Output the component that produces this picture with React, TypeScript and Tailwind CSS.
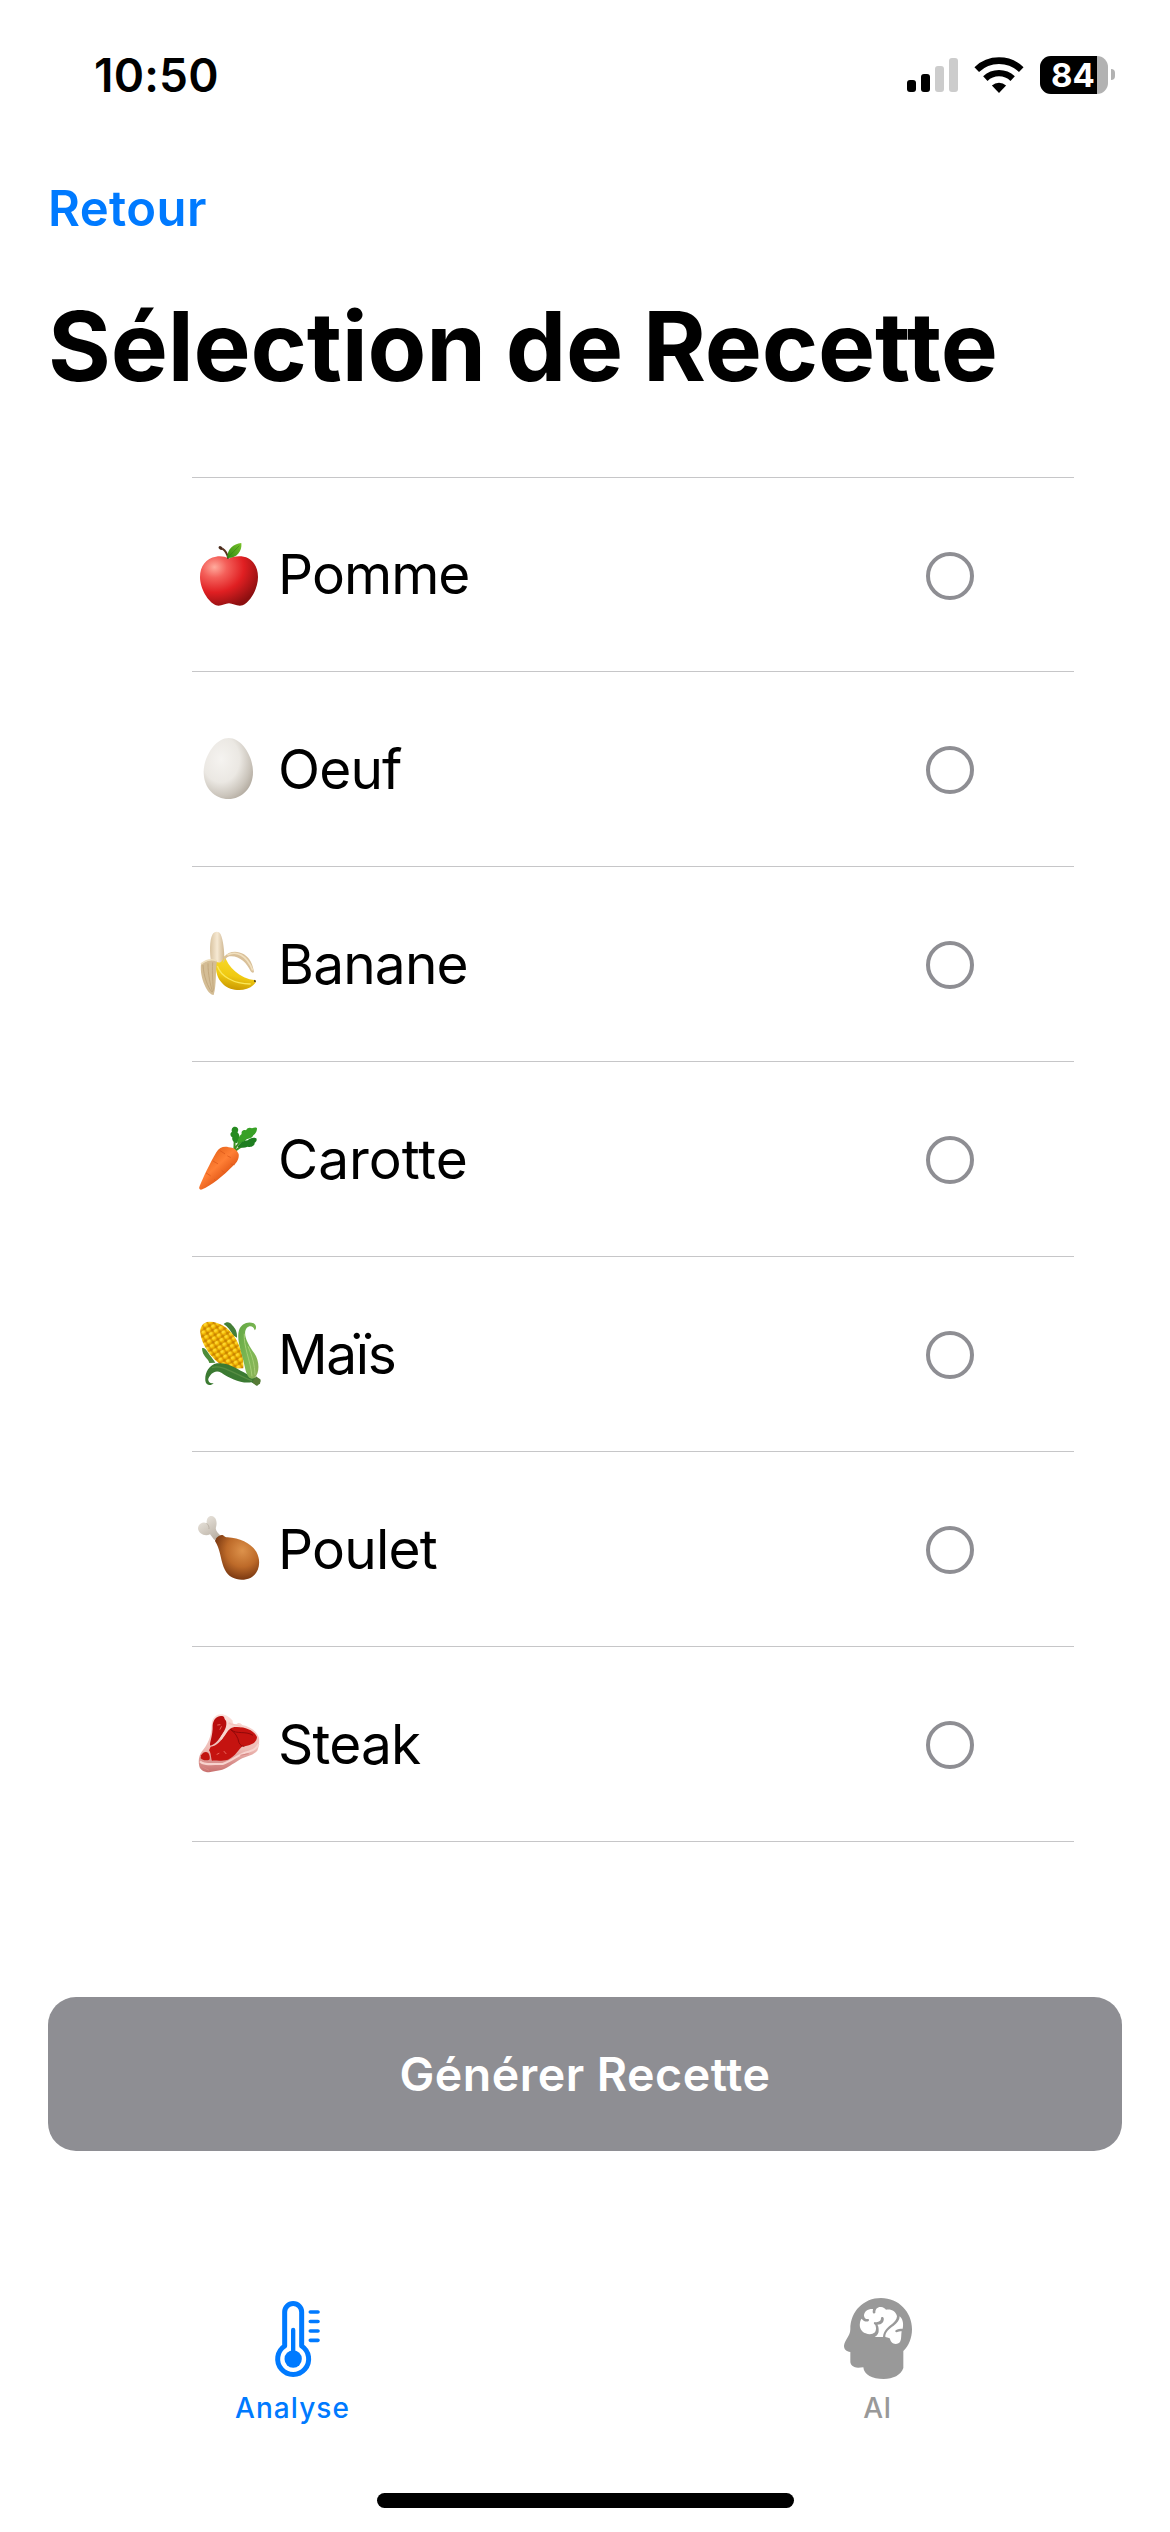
import { useState, type ReactNode } from "react";

function Emoji({ top, children }: { top: number; children: ReactNode }) {
  return (
    <svg viewBox={`54 ${top} 192 192`} className="h-16 w-16 shrink-0 overflow-visible" aria-hidden="true">
      {children}
    </svg>
  );
}

function Apple() {
  return (
    <Emoji top={66}>
      <defs>
        <radialGradient id="apple" cx="0.25" cy="0.22" r="0.85">
          <stop offset="0" stopColor="#ffab9d" />
          <stop offset="0.25" stopColor="#f4605a" />
          <stop offset="0.6" stopColor="#e01f22" />
          <stop offset="1" stopColor="#8c0f10" />
        </radialGradient>
        <linearGradient id="leaf" x1="0" y1="1" x2="1" y2="0">
          <stop offset="0" stopColor="#2f8a12" />
          <stop offset="1" stopColor="#7ac32a" />
        </linearGradient>
      </defs>
      <path d="M146 113C135 106 121 105 108 107C78 111 60 136 60 168C60 202 84 243 108 253C122 258 134 247 147 247C160 247 172 258 188 253C212 243 234 202 234 168C234 134 214 109 184 106C170 105 158 107 146 113Z" fill="url(#apple)" />
      <path d="M145 113C142 99 135 88 127 83" stroke="#5b3420" strokeWidth="6" fill="none" />
      <ellipse cx="122" cy="81" rx="7" ry="5" fill="#4b2b1c" transform="rotate(35 122 81)" />
      <path d="M142 111C141 85 160 68 184 66C187 91 170 112 142 111Z" fill="url(#leaf)" />
      <path d="M144 109C155 98 166 86 178 74" stroke="#2c7a10" strokeWidth="1.5" fill="none" />
    </Emoji>
  );
}

function Egg() {
  return (
    <Emoji top={81}>
      <defs>
        <radialGradient id="egg" cx="0.35" cy="0.35" r="0.75">
          <stop offset="0" stopColor="#f5f3f0" />
          <stop offset="0.5" stopColor="#ebe8e3" />
          <stop offset="0.8" stopColor="#cbc5bc" />
          <stop offset="1" stopColor="#b0a89d" />
        </radialGradient>
      </defs>
      <path d="M146 84C186 84 219 140 219 186C219 235 185 267 145 267C104 267 71 235 71 186C71 140 106 84 146 84Z" fill="url(#egg)" />
    </Emoji>
  );
}

function Banana() {
  return (
    <Emoji top={66}>
      <defs>
        <linearGradient id="bananaFlesh" x1="0" y1="0" x2="1" y2="0">
          <stop offset="0" stopColor="#d9c3a0" />
          <stop offset="0.5" stopColor="#f6e9d3" />
          <stop offset="1" stopColor="#cfb792" />
        </linearGradient>
        <linearGradient id="bananaSkin" x1="0.6" y1="0" x2="0.4" y2="1">
          <stop offset="0" stopColor="#f9dc2e" />
          <stop offset="0.6" stopColor="#f0ca12" />
          <stop offset="1" stopColor="#c99700" />
        </linearGradient>
      </defs>
      <path d="M94 158C88 130 89 88 97 74C103 63 117 63 122 73C130 90 133 125 133 145L122 162Z" fill="url(#bananaFlesh)" />
      <path d="M108 155C120 160 126 158 134 137C144 170 176 204 227 211C229 216 226 220 221 224C196 248 152 243 131 224C116 211 105 192 108 155Z" fill="url(#bananaSkin)" />
      <path d="M112 168C122 198 160 222 212 222" stroke="#fbe758" strokeWidth="4" fill="none" />
      <path d="M222 209L228 212L227 217L222 215Z" fill="#54451b" />
      <path d="M132 141C145 124 170 120 192 133C211 145 219 166 222 186C219 190 215 188 212 184C201 158 176 135 148 139C138 142 134 151 128 160Z" fill="#d9c099" />
      <path d="M142 135C168 122 199 133 218 181" stroke="#f1e0bf" strokeWidth="5" fill="none" />
      <path d="M63 162C78 152 96 146 111 153C106 180 110 225 101 255C84 256 58 205 63 162Z" fill="#d4bd95" />
      <path d="M69 165C71 200 84 232 96 247M84 160C84 195 91 225 98 246M98 157C96 190 99 220 100 242" stroke="#bfa478" strokeWidth="2.5" fill="none" />
      <path d="M63 162C78 150 96 146 111 153" stroke="#eedfbf" strokeWidth="5" fill="none" />
    </Emoji>
  );
}

function Carrot() {
  return (
    <Emoji top={651}>
      <defs>
        <linearGradient id="carrot" x1="0.2" y1="0.2" x2="0.7" y2="0.8">
          <stop offset="0" stopColor="#e8651b" />
          <stop offset="0.45" stopColor="#ff7f35" />
          <stop offset="1" stopColor="#d84a0c" />
        </linearGradient>
      </defs>
      <path d="M162 722C168 705 186 690 206 678M163 720C165 700 164 685 162 668M166 722C180 710 198 702 214 698" stroke="#3c8f1e" strokeWidth="6" fill="none" />
      <path d="M170 700C160 697 155 690 157 682C149 677 150 668 156 666C152 656 160 647 168 651C176 653 176 662 172 667C181 674 180 688 170 700Z" fill="#268a20" />
      <path d="M172 700C174 685 178 678 185 672C183 664 189 657 198 661C202 651 212 652 216 655C223 651 231 652 231 655C231 663 228 670 220 676C217 685 205 686 200 688C192 697 182 700 172 700Z" fill="#38a126" />
      <path d="M172 712C180 698 190 692 203 691C210 683 222 681 229 685C232 691 228 695 224 698C225 708 213 713 203 710C192 715 182 712 172 712Z" fill="#1d7d20" />
      <path d="M109 727C118 712 132 708 146 712C161 713 170 719 176 732C178 746 171 757 161 766C131 797 92 828 67 838C59 841 55 836 59 828C70 802 88 763 109 727Z" fill="url(#carrot)" />
      <path d="M120 722L134 731M153 762L163 764M99 753L113 761M126 782L133 787M79 789L91 797M103 808L107 812M143 738L151 742" stroke="#dd5a1c" strokeWidth="2.5" strokeLinecap="round" />
    </Emoji>
  );
}

function Corn() {
  return (
    <Emoji top={66}>
      <defs>
        <pattern id="kernels" width="17" height="16" patternUnits="userSpaceOnUse" patternTransform="rotate(-32)">
          <rect width="17" height="16" fill="#c98200" />
          <rect x="1" y="1" width="15" height="14" rx="5.5" fill="#f2b705" />
          <rect x="3" y="2" width="10" height="8" rx="4" fill="#ffd92b" />
        </pattern>
        <linearGradient id="husk" x1="0" y1="0" x2="1" y2="1">
          <stop offset="0" stopColor="#63a744" />
          <stop offset="0.6" stopColor="#7fb955" />
          <stop offset="1" stopColor="#8fae58" />
        </linearGradient>
      </defs>
      <path d="M131 72C139 64 150 65 156 75C167 86 172 96 171 113L159 106C151 90 144 80 131 72Z" fill="#447f36" />
      <path d="M66 145C75 140 82 155 89 165C96 173 101 181 106 188L88 189C85 175 67 170 66 145Z" fill="#4c8b39" />
      <path d="M62 105C57 82 68 66 88 65C117 64 147 85 161 106C181 137 193 174 190 205L148 206C119 199 72 156 62 105Z" fill="url(#kernels)" />
      <path d="M101 249C93 259 78 257 76 242C74 221 85 195 111 190C145 186 167 205 190 216C205 225 220 232 240 237L241 245L232 257L214 247C180 251 150 235 124 218C104 207 91 223 85 236C83 246 92 252 101 249Z" fill="#3b7a32" />
      <path d="M96 203C127 193 155 218 216 242" stroke="#578d43" strokeWidth="4" fill="none" />
      <path d="M228 229L242 239L240 251L229 257L217 247Z" fill="#567a36" />
      <path d="M224 91C221 77 208 75 200 84C186 103 206 136 223 160C239 183 240 220 223 234C207 242 199 225 194 199C187 162 168 119 177 91C183 72 203 63 221 70C230 75 230 86 224 91Z" fill="url(#husk)" />
      <path d="M193 101C190 139 211 179 216 229M204 139C217 169 224 195 225 224" stroke="#a7ce76" strokeWidth="3" fill="none" />
    </Emoji>
  );
}

function Drumstick() {
  return (
    <Emoji top={651}>
      <defs>
        <radialGradient id="meat" cx="0.62" cy="0.35" r="0.72">
          <stop offset="0" stopColor="#dd924b" />
          <stop offset="0.5" stopColor="#bd6a29" />
          <stop offset="1" stopColor="#6b2d0c" />
        </radialGradient>
        <linearGradient id="bone" x1="0" y1="0" x2="0.6" y2="1">
          <stop offset="0" stopColor="#f0ece5" />
          <stop offset="1" stopColor="#bcb3a7" />
        </linearGradient>
      </defs>
      <path d="M103 720L90 703C75 711 55 701 54 685C55 671 69 664 80 670C79 655 86 647 95 648C107 650 113 664 108 682C105 690 114 700 122 707Z" fill="url(#bone)" />
      <path d="M80 670C85 675 88 680 87 687" stroke="#b6aca0" strokeWidth="2.5" fill="none" />
      <path d="M105 723C107 714 116 706 125 705C132 705 133 712 142 712C180 715 211 728 229 755C246 786 236 822 211 834C183 846 148 837 135 810C123 787 122 755 110 732Z" fill="url(#meat)" />
    </Emoji>
  );
}

function Steak() {
  return (
    <Emoji top={636}>
      <defs>
        <linearGradient id="fat" x1="0" y1="0" x2="0" y2="1">
          <stop offset="0" stopColor="#fbe1dc" />
          <stop offset="0.6" stopColor="#eebbb5" />
          <stop offset="1" stopColor="#c9706e" />
        </linearGradient>
      </defs>
      <path d="M95 674C96 655 107 644 122 643C137 643 148 651 158 662C157 671 161 674 170 673C174 666 182 668 187 675C209 679 230 693 237 713C239 726 236 742 232 752C218 768 198 768 181 778C159 791 138 808 120 811L87 817C71 817 60 809 58 799C54 783 57 766 65 755C83 732 94 713 95 674Z" fill="url(#fat)" />
      <path d="M60 784C70 797 102 791 128 792C157 783 180 759 205 755C220 752 231 743 236 732" stroke="#f8d3ce" strokeWidth="6" fill="none" />
      <path d="M98 676C100 657 112 646 126 648C136 650 131 657 138 662C142 676 135 690 127 702C118 716 107 734 91 737C87 731 99 709 98 676Z" fill="#b90d0d" />
      <path d="M92 740C110 739 123 723 137 703C145 688 155 680 171 681C199 681 222 692 231 711C230 729 211 737 188 739C175 747 169 768 144 779C125 784 109 781 96 782C92 773 94 760 87 751Z" fill="#c51310" />
      <path d="M151 688C165 697 174 711 177 728C181 736 187 739 193 739M151 688C171 705 195 691 219 706" stroke="#8f0808" strokeWidth="3" fill="none" />
      <path d="M63 766C69 756 78 753 85 759C89 766 91 774 88 779C80 783 67 781 62 775Z" fill="#c11410" />
      <path d="M150 665C150 684 132 698 122 718" stroke="#f8d5ce" strokeWidth="7" fill="none" />
      <path d="M146 669C159 678 171 672 183 680" stroke="#f4c4bd" strokeWidth="5" fill="none" />
      <path d="M113 675L120 674M111 763L117 760M132 754L138 761M120 688L124 680" stroke="#e8665c" strokeWidth="3" strokeLinecap="round" />
      <path d="M67 801L87 811M121 803L146 791M181 766L206 761" stroke="#d88784" strokeWidth="3" fill="none" />
    </Emoji>
  );
}

function Signal() {
  return (
    <div className="flex h-[34px] items-end gap-[5px]">
      <div className="h-3 w-[9px] rounded-[3px] bg-black" />
      <div className="h-[18px] w-[9px] rounded-[3px] bg-black" />
      <div className="h-[26px] w-[9px] rounded-[3px] bg-[#cccccc]" />
      <div className="h-[34px] w-[9px] rounded-[3px] bg-[#cccccc]" />
    </div>
  );
}

function Wifi() {
  return (
    <svg viewBox="282 72 150 114" className="h-[38px] w-[50px]" aria-hidden="true">
      <path d="M290.2 112.7A97 97 0 0 1 423.8 112.7" stroke="#000" strokeWidth="20" fill="none" />
      <path d="M316 139.9A59.5 59.5 0 0 1 398 139.9" stroke="#000" strokeWidth="19" fill="none" />
      <path d="M357 183L335.7 160.5A31 31 0 0 1 378.3 160.5Z" />
    </svg>
  );
}

function Battery() {
  return (
    <div className="flex items-center gap-[3px]">
      <div className="flex h-[38px] w-[68px] overflow-hidden rounded-[11px] bg-[#b2b2b2]">
        <div className="flex w-[57px] items-center bg-black pl-[11px] text-[33px] leading-[38px] font-bold text-white">84</div>
      </div>
      <div className="h-[11px] w-1 rounded-r-full bg-[#b2b2b2]" />
    </div>
  );
}

function Thermometer() {
  return (
    <svg viewBox="192 60 168 234" className="h-[78px] w-14" fill="none" stroke="#007aff" aria-hidden="true">
      <path d="M251 96A25.5 25.5 0 0 1 302 96V198A46.5 46.5 0 1 1 251 198Z" strokeWidth="15" strokeLinejoin="round" />
      <path d="M276.5 150V237" strokeWidth="13" strokeLinecap="round" />
      <circle cx="276.5" cy="237" r="26" fill="#007aff" stroke="none" />
      <path d="M328 96H351M328 124.5H351M328 153H351M328 181H351" strokeWidth="11" strokeLinecap="round" />
    </svg>
  );
}

function BrainHead() {
  return (
    <svg viewBox="126 51 210 249" className="h-[83px] w-[70px]" aria-hidden="true">
      <path d="M148 148C148 94 188 54 240 54C293 54 333 96 333 148C333 174 323 198 307 213V264C300 285 276 297 248 297C214 297 189 285 187 262C176 263 166 264 160 261C150 257 147 250 148 240V216C136 215 129 207 129 198C130 182 148 168 148 148Z" fill="#999999" />
      <path d="M189 107C189 94 201 86 216 87L215 95C215 100 219 102 223 99C222 87 230 80 240 81C247 82 252 85 255 89C271 86 285 94 288 109C287 118 282 125 274 131C261 141 247 152 246 171H221C229 166 234 160 233 150C233 143 232 138 229 134C243 134 250 125 248 114C247 110 240 109 240 115C240 124 232 128 221 126C216 128 219 133 223 135C226 143 226 150 222 157C214 164 203 164 194 160C181 155 174 142 177 128C178 123 179 119 182 116C187 124 196 126 202 124C206 121 204 116 200 117C195 118 190 114 189 107Z" fill="#fff" />
      <path d="M296 109C304 115 309 130 305 146C297 146 290 147 284 151C281 155 285 159 289 156C294 154 298 153 302 154C300 164 302 175 298 184C294 193 279 195 272 187C268 183 268 179 266 175C261 173 257 172 253 171C252 156 266 145 278 137C289 129 296 120 296 109Z" fill="#fff" />
    </svg>
  );
}

const INGREDIENTS = [
  { name: "Pomme", icon: <Apple />, height: "h-[194px]", tracking: "tracking-[-0.95px]" },
  { name: "Oeuf", icon: <Egg />, height: "h-[195px]", tracking: "tracking-[-0.87px]" },
  { name: "Banane", icon: <Banana />, height: "h-[195px]", tracking: "tracking-[-0.84px]" },
  { name: "Carotte", icon: <Carrot />, height: "h-[195px]", tracking: "tracking-[-0.03px]" },
  { name: "Maïs", icon: <Corn />, height: "h-[195px]", tracking: "tracking-[-1.4px]" },
  { name: "Poulet", icon: <Drumstick />, height: "h-[195px]", tracking: "tracking-[-0.78px]" },
  { name: "Steak", icon: <Steak />, height: "h-[195px]", tracking: "tracking-[-0.8px]" },
];

export default function App() {
  const [selected, setSelected] = useState<string[]>([]);
  const toggle = (name: string) =>
    setSelected((prev) => (prev.includes(name) ? prev.filter((n) => n !== name) : [...prev, name]));

  return (
    <div className="flex h-[2532px] w-[1170px] flex-col overflow-hidden bg-white font-['Inter',sans-serif] text-black">
      <header className="flex h-[149px] shrink-0 items-center justify-between pr-[55px] pl-[94px]">
        <span className="text-[46px] leading-none font-semibold tracking-[0.2px]">10:50</span>
        <div className="flex items-center">
          <Signal />
          <div className="mr-4 ml-4">
            <Wifi />
          </div>
          <Battery />
        </div>
      </header>

      <div className="flex h-[118px] shrink-0 items-center px-12">
        <button className="text-[49px] leading-none font-semibold tracking-[0.4px] text-[#007aff]">Retour</button>
      </div>

      <h1 className="flex h-[158px] shrink-0 items-center px-12 text-[96px] leading-none font-bold tracking-[-0.2px] whitespace-nowrap [word-spacing:-2.5px]">
        Sélection de Recette
      </h1>

      <ul className="mt-[52px] mr-24 ml-48 border-t border-[#c6c6c8]">
        {INGREDIENTS.map(({ name, icon, height, tracking }) => (
          <li
            key={name}
            onClick={() => toggle(name)}
            className={`flex items-center border-b border-[#c6c6c8] pr-[100px] pl-1.5 ${height}`}
          >
            {icon}
            <span className={`ml-4 grow text-[55px] leading-none ${tracking}`}>{name}</span>
            <span
              className={`mt-0.5 h-12 w-12 rounded-full border-4 ${selected.includes(name) ? "border-[#007aff] bg-[#007aff]" : "border-[#8e8e93]"}`}
            />
          </li>
        ))}
      </ul>

      <button className="mx-12 mt-[155px] h-[154px] shrink-0 rounded-[28px] bg-[#8e8e93] text-[46.5px] leading-none font-semibold tracking-[0.5px] text-white">
        Générer Recette
      </button>

      <nav className="mt-[146px] grid grid-cols-2 text-[28px] leading-[34px] font-medium">
        <div className="flex flex-col items-center text-[#007aff]">
          <div className="flex h-[83px] items-center">
            <Thermometer />
          </div>
          <span className="mt-[11px] tracking-[1.07px]">Analyse</span>
        </div>
        <div className="flex flex-col items-center text-[#999999]">
          <div className="flex h-[83px] items-center">
            <BrainHead />
          </div>
          <span className="mt-[11px] tracking-[0.6px]">AI</span>
        </div>
      </nav>

      <div className="mx-auto mt-[68px] h-[15px] w-[417px] shrink-0 rounded-full bg-black" />
    </div>
  );
}
